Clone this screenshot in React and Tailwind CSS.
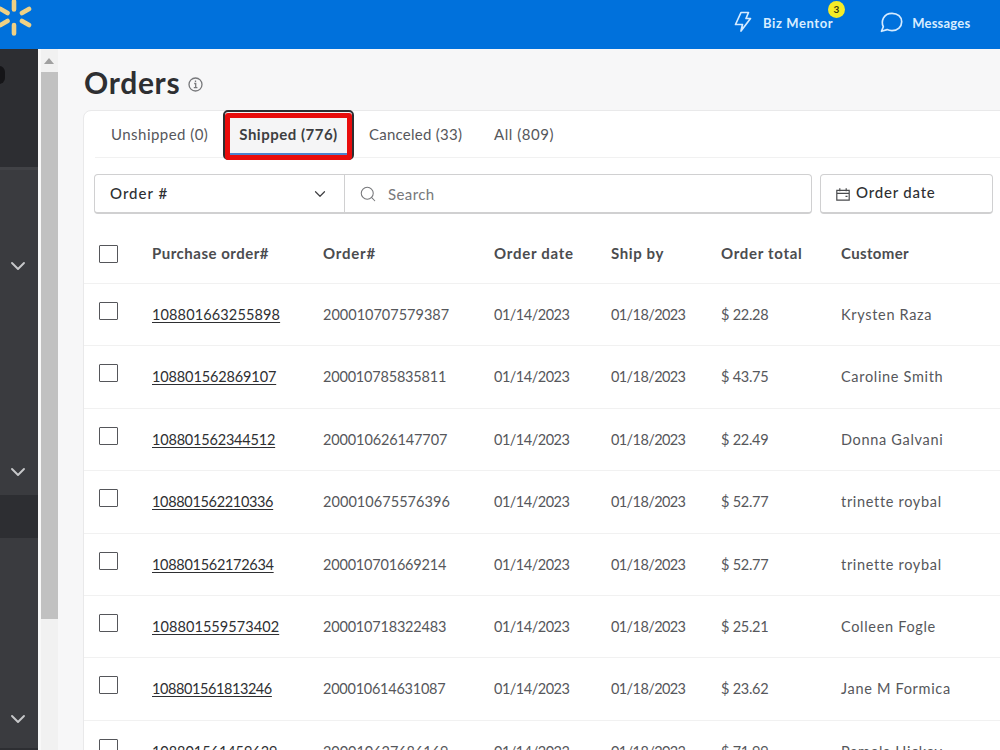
import React from 'react';
import { ChevronDown, Search } from 'lucide-react';

const orders = [
  { po: '108801663255898', order: '200010707579387', total: '22.28', customer: 'Krysten Raza', poClass: 'tracking-[0.13px]', orderClass: 'tracking-[0px]' },
  { po: '108801562869107', order: '200010785835811', total: '43.75', customer: 'Caroline Smith', poClass: 'tracking-[-0.13px]', orderClass: 'tracking-[-0.2px]' },
  { po: '108801562344512', order: '200010626147707', total: '22.49', customer: 'Donna Galvani', poClass: 'tracking-[-0.2px]', orderClass: 'tracking-[-0.13px]' },
  { po: '108801562210336', order: '200010675576396', total: '52.77', customer: 'trinette roybal', poClass: 'tracking-[-0.33px]', orderClass: 'tracking-[0.05px]' },
  { po: '108801562172634', order: '200010701669214', total: '52.77', customer: 'trinette roybal', poClass: 'tracking-[-0.3px]', orderClass: 'tracking-[-0.2px]' },
  { po: '108801559573402', order: '200010718322483', total: '25.21', customer: 'Colleen Fogle', poClass: 'tracking-[0.07px]', orderClass: 'tracking-[-0.2px]' },
  { po: '108801561813246', order: '200010614631087', total: '23.62', customer: 'Jane M Formica', poClass: 'tracking-[-0.42px]', orderClass: 'tracking-[-0.25px]' },
  { po: '108801561459639', order: '200010627686169', total: '71.99', customer: 'Pamela Hickey', poClass: 'tracking-[-0.05px]', orderClass: 'tracking-[-0.05px]' },
];

const columns = 'grid grid-cols-[53px_171px_171px_117px_110px_120px_1fr] pl-[15px]';

const Spark = () => (
  <svg className="w-[38px] h-[38px] shrink-0" viewBox="0 0 38 38" fill="none" stroke="#f0d184" strokeWidth="4.6" strokeLinecap="round">
    <path d="M19 3.500v8M19 27v8.500M5.500 11l7 4M27 23l7 4M5.500 27l7-4M27 15l7-4" />
  </svg>
);

const InfoIcon = () => (
  <svg className="w-[15px] h-[15px] mt-[3px]" viewBox="0 0 15 15" fill="none" stroke="#77787b" strokeWidth="1.300">
    <circle cx="7.500" cy="7.500" r="6.500" />
    <path d="M6.200 6.500h1.500v4M5.800 10.700h3.600M7.500 3.600v1.500" />
  </svg>
);

const BoltIcon = () => (
  <svg className="w-[18px] h-[23px]" viewBox="0 0 18 23" fill="none" stroke="#d5ebff" strokeWidth="1.700" strokeLinejoin="round">
    <path d="M7 1.500h7.500L12 7.500H16.500L7 20l1.500-6.500H1.500z" />
  </svg>
);

const ChatIcon = () => (
  <svg className="w-[23px] h-[21px]" viewBox="0 0 23 21" fill="none" stroke="#d5ebff" strokeWidth="1.700" strokeLinejoin="round">
    <path d="M1.500 19.300l1.800-4.600C.8 9.500 3.200 1.300 12 1.300c5.700 0 9.700 3.600 9.700 8.500s-4 8.800-9.700 8.800c-2 0-3.500-.3-4.900-1z" />
  </svg>
);

const CalendarIcon = () => (
  <svg className="w-[14px] h-[13px] mt-[2px]" viewBox="0 0 14 13" fill="none" stroke="#4a4b4e" strokeWidth="1.200">
    <path d="M.8 2.300h12.400v9.900H.8zM.8 5.300h12.400M3.800.3v3M10.200.3v3M9.500 8.300h2" />
  </svg>
);

const Checkbox = ({ className = '' }) => (
  <div className={`w-[19px] h-[18px] border border-[#55565a] rounded-[1px] bg-white ${className}`} />
);

const Header = () => (
  <header className="h-[49px] bg-[#0071dc] flex items-start text-[#d9edff] font-bold text-[13px] shrink-0">
    <div className="-ml-[5px] -mt-[2px]"><Spark /></div>
    <div className="ml-[701px] mt-[11px] flex items-center relative">
      <BoltIcon />
      <span className="ml-[11px] mt-[2px] tracking-[0.6px] whitespace-nowrap">Biz Mentor</span>
      <span className="absolute -top-[10px] left-[94px] w-[17px] h-[17px] rounded-full bg-[#f5ec27] text-[#3b3a12] text-[10px] leading-[16px] text-center">3</span>
    </div>
    <div className="ml-[47px] mt-[11px] flex items-center">
      <ChatIcon />
      <span className="ml-[9px] mt-[3px] tracking-[0.200px]">Messages</span>
    </div>
  </header>
);

const Sidebar = () => (
  <aside className="w-[38px] shrink-0 bg-[#3a3b3f] flex flex-col overflow-hidden">
    <div className="h-[118px] bg-[#2d2e32] shrink-0">
      <div className="w-[12px] h-[18px] -ml-[7px] mt-[17px] rounded-full bg-[#151518]" />
    </div>
    <div className="h-[3px] bg-[#414246] shrink-0" />
    <div className="h-[325px] shrink-0 flex flex-col text-[#c7c8ca]">
      <ChevronDown className="mt-[84px] ml-[6px] shrink-0" size={24} strokeWidth={1.9} />
      <ChevronDown className="mt-[182px] ml-[6px] shrink-0" size={24} strokeWidth={1.9} />
    </div>
    <div className="h-[43px] bg-[#2d2e32] shrink-0" />
    <ChevronDown className="mt-[169px] ml-[6px] shrink-0 text-[#c7c8ca]" size={24} strokeWidth={1.9} />
    <div className="mt-[17px] h-[2px] bg-[#2d2e32] shrink-0" />
  </aside>
);

const Scrollbar = () => (
  <div className="w-[20px] shrink-0 bg-[#f1f1f1] border-l-[3px] border-[#f8f8f8]">
    <div className="h-[23px] flex items-center justify-center">
      <div className="-ml-px border-x-[5px] border-x-transparent border-b-[6px] border-b-[#a0a0a0]" />
    </div>
    <div className="h-[547px] bg-[#c1c1c1]" />
  </div>
);

const Tabs = () => (
  <div className="h-[47px] ml-[11px] border-b border-[#f1f1f1] flex items-center text-[15px] text-[#56575b] whitespace-nowrap">
    <span className="w-[128px] pl-[16px] tracking-[0.460px]">Unshipped (0)</span>
    <div className="relative w-[131px] h-[50px] mt-[1px] shrink-0 bg-[#f5f5f6] border-2 border-[#2e2f32] rounded-[5px] flex items-center justify-center text-[#3d3e41] font-bold tracking-[0.500px]">
      Shipped (776)
      <div className="absolute left-0 right-0 top-[1px] -bottom-[2px] border-[5px] border-[#e90c0c] rounded-[3px]">
        <div className="h-full border-b-2 border-[#4c83cf]" />
      </div>
    </div>
    <span className="w-[124px] pl-[15px] tracking-[0.250px]">Canceled (33)</span>
    <span className="pl-[16px] tracking-[0.550px]">All (809)</span>
  </div>
);

const Filters = () => (
  <div className="mt-[16px] ml-[10px] flex h-[40px] text-[15px] text-[#3f4043]">
    <div className="w-[251px] border border-b-2 border-[#d0d0d1] rounded-l-[4px] flex items-center justify-between pl-[15px] pr-[15px]">
      <span className="font-medium tracking-[1px] text-[#2e2f32]">Order #</span>
      <ChevronDown size={18} strokeWidth={1.6} />
    </div>
    <div className="w-[467px] border border-b-2 border-l-0 border-[#d0d0d1] rounded-r-[4px] flex items-center pl-[14px]">
      <Search size={18} strokeWidth={1.4} className="text-[#77787b]" />
      <span className="ml-[11px] mt-[2px] text-[#77787b] tracking-[0.400px]">Search</span>
    </div>
    <div className="ml-[8px] w-[173px] border border-b-2 border-[#d0d0d1] rounded-[4px] flex items-center pl-[15px]">
      <CalendarIcon />
      <span className="ml-[6px] -mt-[3px] text-[#2e2f32] font-medium tracking-[0.800px]">Order date</span>
    </div>
  </div>
);

const OrdersTable = () => (
  <div className="whitespace-nowrap">
    <div className={`${columns} h-[70px] pt-[31px] border-b border-[#f1f1f1] text-[15px] leading-[18px] font-bold text-[#4b4c4f]`}>
      <Checkbox />
      <span className="-mt-px tracking-[0.500px]">Purchase order#</span>
      <span className="-mt-px tracking-[0.800px]">Order#</span>
      <span className="-mt-px tracking-[0.750px]">Order date</span>
      <span className="-mt-px tracking-[0.600px]">Ship by</span>
      <span className="-mt-px tracking-[0.700px]">Order total</span>
      <span className="-mt-px tracking-[0.350px]">Customer</span>
    </div>
    {orders.map((o) => (
      <div key={o.po} className={`${columns} h-[62.4px] border-b border-[#f1f1f1] text-[14.500px] leading-[18px] pt-[22px] text-[#56575b]`}>
        <Checkbox className="-mt-[4px]" />
        <span className={`text-[#2e2f32] ${o.poClass}`}>
          <span className="underline underline-offset-[2px] decoration-1">{o.po}</span>
        </span>
        <span className={o.orderClass}>{o.order}</span>
        <span className="tracking-[-0.500px]">01/14/2023</span>
        <span className="tracking-[-0.600px]">01/18/2023</span>
        <span className="tracking-[-0.250px]">$ {o.total}</span>
        <span className="tracking-[0.680px]">{o.customer}</span>
      </div>
    ))}
  </div>
);

const App = () => {
  return (
    <div className="w-[1000px] h-[750px] overflow-hidden flex flex-col bg-[#f7f7f8] font-['Lato','Liberation_Sans',sans-serif]">
      <Header />
      <div className="flex flex-1 min-h-0">
        <Sidebar />
        <Scrollbar />
        <main className="flex-1 min-w-0 pl-[25px] overflow-hidden">
          <div className="h-[61px] pl-[1px] pt-[6px] flex items-center gap-[8px]">
            <h1 className="text-[30px] leading-[34px] font-bold tracking-[0.700px] text-[#2e2f32] -mt-[2px]">Orders</h1>
            <InfoIcon />
          </div>
          <section className="bg-white w-[930px] h-[700px] border border-[#e9e9ea] rounded-tl-[8px]">
            <Tabs />
            <Filters />
            <OrdersTable />
          </section>
        </main>
      </div>
    </div>
  );
};

export default App;
